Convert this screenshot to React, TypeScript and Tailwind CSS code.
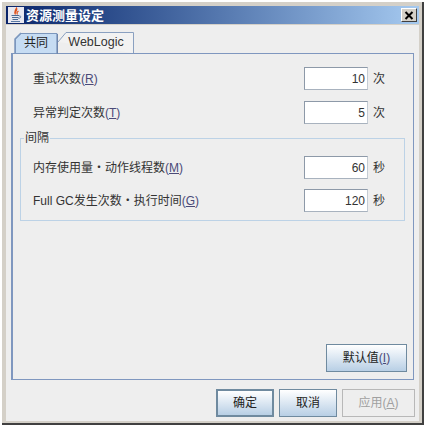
const font = { fontFamily: '"Liberation Sans","Noto Sans CJK SC",sans-serif' };

function JavaIcon() {
  return (
    <svg width="16" height="16" viewBox="0 0 16 16" className="shrink-0">
      <rect x="0" y="0" width="16" height="16" fill="#e8e8f0" />
      <path d="M8.5 1 C10 3.5 6 5 7.5 7.5 C6 5.5 6.5 4 8.5 1 Z M10.5 4 C9 5 8.5 6 9.5 7.5" fill="none" stroke="#e0521c" strokeWidth="1.2" />
      <path d="M3.5 8.5 H11 M4 10.5 H10.5 M4.5 12.5 H10" stroke="#4a6a94" strokeWidth="1" />
      <path d="M3 14.5 H12 M11 9 C13.5 8.5 13.5 11 10.5 11.5" fill="none" stroke="#5a7aa4" strokeWidth="1" />
    </svg>
  );
}

function CloseBtn() {
  return (
    <div className="w-[16px] h-[14px] bg-[#d4d0c8] border-t border-l border-t-white border-l-white border-r border-b border-r-[#404040] border-b-[#404040] flex items-center justify-center">
      <svg width="10" height="9" viewBox="0 0 10 9">
        <path d="M1.5 1 L8.5 8 M8.5 1 L1.5 8" stroke="#000" strokeWidth="2" />
      </svg>
    </div>
  );
}

function Mn({ c }: { c: string }) {
  return (
    <span className="text-[#4a4a78]">
      (<span className="underline">{c}</span>)
    </span>
  );
}

function Row({ label, mn, value, unit }: { label: string; mn: string; value: string; unit: string }) {
  return (
    <div className="flex items-center justify-between h-[23px]">
      <div className="text-[12px] text-[#333] whitespace-nowrap">
        {label}
        <Mn c={mn} />
      </div>
      <div className="flex items-center">
        <div className="w-[64px] h-[23px] bg-white border border-t-[#8d99a8] border-l-[#8d99a8] border-b-[#a8b2be] border-r-[#c4ccd4] flex items-center justify-end pr-[2px] text-[12px] text-[#333]">
          {value}
        </div>
        <div className="w-[21px] ml-[5px] text-[12px] text-[#333]">{unit}</div>
      </div>
    </div>
  );
}

function Btn({ children, w, strong, disabled }: { children: React.ReactNode; w: string; strong?: boolean; disabled?: boolean }) {
  const base = "h-[28px] flex items-center justify-center text-[12px] whitespace-nowrap ";
  const look = disabled
    ? "bg-[#eeeeee] border border-[#b8b8b8] text-[#a0a0a0]"
    : strong
      ? "bg-gradient-to-b from-white to-[#b8cfe5] border-2 border-[#6f8a9f] text-[#222]"
      : "bg-gradient-to-b from-white to-[#b8cfe5] border border-[#6f8a9f] text-[#222]";
  return <div className={base + look + " " + w}>{children}</div>;
}

export default function App() {
  return (
    <div className="w-[426px] h-[428px] bg-white pt-[2px] pl-[2px] overflow-hidden" style={font}>
      <div className="h-[423px] w-[422px] bg-[#d4d0c8] border-r-2 border-b-2 border-r-[#404040] border-b-[#404040] pt-[4px] pl-[4px] pr-[3px] flex flex-col">
        <div className="h-[18px] bg-gradient-to-r from-[#0a246a] to-[#a6caf0] flex items-center pl-[2px] pr-[2px] gap-[2px] shrink-0">
          <JavaIcon />
          <div className="text-[13px] font-bold text-white flex-1 leading-none">资源测量设定</div>
          <CloseBtn />
        </div>
        <div className="flex-1 bg-[#eeeeee] mt-[1px] mb-[2px] px-[5px] pt-[6px] flex flex-col">
          {/* tabs */}
          <div className="flex items-end h-[22px] pl-[3px] shrink-0">
            <div className="relative w-[44px] h-[22px] mb-[-1px] z-10 flex items-center justify-center text-[12px] text-[#222]">
              <svg width="44" height="22" viewBox="0 0 44 22" className="absolute inset-0">
                <path d="M1.5 21.5 V7 L7 1.5 H43 V21.5 Z" fill="#c6dcf3" stroke="#7c97bd" />
                <path d="M1 21.5 V7 L7 1" fill="none" stroke="#7c97bd" strokeWidth="1.5" />
                <path d="M43.5 2 V22" stroke="#6f87ad" strokeWidth="1.5" />
              </svg>
              <span className="relative">共同</span>
            </div>
            <div className="relative w-[76px] h-[22px] flex items-center justify-center text-[12.5px] text-[#333]">
              <svg width="76" height="22" viewBox="0 0 76 22" className="absolute inset-0">
                <path d="M0 11 L8 1.5 H75.5 V22" fill="#f2f2f2" stroke="#8aa0c0" />
              </svg>
              <span className="relative">WebLogic</span>
            </div>
          </div>
          {/* panel */}
          <div className="h-[327px] border-2 border-[#7f97bf] border-t border-r-[1px] border-b-[1.5px] pl-[20px] pr-[19px] pt-[13px] flex flex-col bg-[#eeeeee]">
            <div className="flex flex-col gap-[11px]">
              <Row label="重试次数" mn="R" value="10" unit="次" />
              <Row label="异常判定次数" mn="T" value="5" unit="次" />
            </div>
            <div className="relative mt-[14px] ml-[-13px] mr-[-11px] h-[83px] border border-[#bcd2e6] pl-[12px] pr-[10px] pt-[17px] flex flex-col gap-[10px] shrink-0">
              <div className="absolute left-[3px] top-[-8px] bg-[#eeeeee] px-[1px] text-[12px] leading-[14px] text-[#333]">间隔</div>
              <Row label="内存使用量・动作线程数" mn="M" value="60" unit="秒" />
              <Row label="Full GC发生次数・执行时间" mn="G" value="120" unit="秒" />
            </div>
            <div className="mt-auto mb-[7px] flex justify-end mr-[-13px]">
              <Btn w="w-[81px]">
                默认值
                <Mn c="I" />
              </Btn>
            </div>
          </div>
          {/* footer */}
          <div className="mt-[9px] flex justify-end gap-[5px] mr-[-1px]">
            <Btn w="w-[58px]" strong>确定</Btn>
            <Btn w="w-[58px]">取消</Btn>
            <Btn w="w-[73px]" disabled>
              应用(<span className="underline">A</span>)
            </Btn>
          </div>
        </div>
      </div>
    </div>
  );
}
